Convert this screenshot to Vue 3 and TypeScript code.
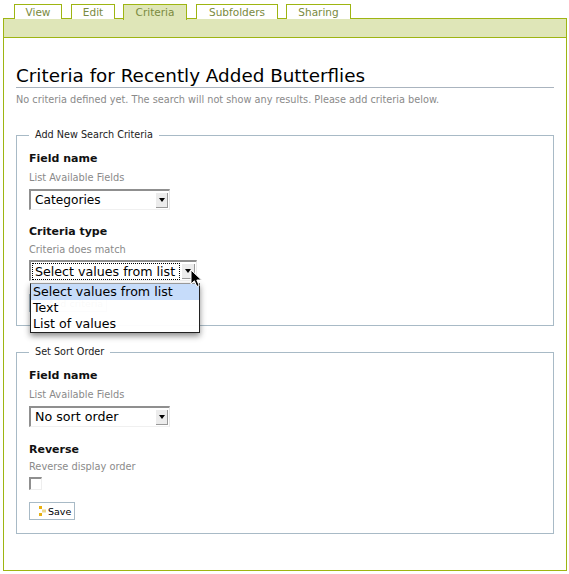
<script setup lang="ts">
const tabs = [
  { label: 'View', width: 48, gap: 9 },
  { label: 'Edit', width: 44, gap: 8 },
  { label: 'Criteria', width: 64, gap: 9, active: true },
  { label: 'Subfolders', width: 82, gap: 8 },
  { label: 'Sharing', width: 65, gap: 0 },
]
const options = ['Select values from list', 'Text', 'List of values']
</script>

<template>
  <div class="page">
    <nav class="tabs">
      <a
        v-for="t in tabs"
        :key="t.label"
        class="tab"
        :class="{ active: t.active }"
        :style="{ width: t.width + 'px', marginRight: t.gap + 'px' }"
      >{{ t.label }}</a>
    </nav>
    <main class="panel">
      <div class="bar"></div>
      <div class="content">
        <h1>Criteria for Recently Added Butterflies</h1>
        <p class="desc">No criteria defined yet. The search will not show any results. Please add criteria below.</p>

        <fieldset class="first">
          <legend>Add New Search Criteria</legend>
          <div class="field">
            <label>Field name</label>
            <div class="help">List Available Fields</div>
            <div class="select">
              <span class="value cat">Categories</span>
              <span class="arrow"><i></i></span>
            </div>
          </div>
          <div class="field type">
            <label>Criteria type</label>
            <div class="help">Criteria does match</div>
            <div class="select focus">
              <span class="value">Select values from list</span>
              <span class="arrow"><i></i></span>
            </div>
            <ul class="menu">
              <li v-for="(o, i) in options" :key="o" :class="{ sel: i === 0 }">{{ o }}</li>
            </ul>
            <svg class="cursor" width="14" height="20" viewBox="0 0 14 20">
              <path d="M1 1 L1 15 L4.4 11.8 L6.8 17.5 L9.2 16.5 L6.8 11 L11.5 11 Z" fill="#000" stroke="#fff" stroke-width="1" />
            </svg>
          </div>
          <button class="btn ghost" type="button">Add criteria</button>
        </fieldset>

        <fieldset class="second">
          <legend>Set Sort Order</legend>
          <div class="field">
            <label>Field name</label>
            <div class="help">List Available Fields</div>
            <div class="select">
              <span class="value">No sort order</span>
              <span class="arrow"><i></i></span>
            </div>
          </div>
          <div class="field rev">
            <label>Reverse</label>
            <div class="help">Reverse display order</div>
            <span class="check"></span>
          </div>
          <button class="btn save" type="button">
            <svg width="7" height="10" viewBox="0 0 7 10">
              <rect x="0" y="0" width="3" height="3" fill="#e8b010" />
              <rect x="0" y="7" width="3" height="3" fill="#e8b010" />
              <rect x="3" y="3.5" width="4" height="3" fill="#ecd88c" />
            </svg>
            <span>Save</span>
          </button>
        </fieldset>
      </div>
    </main>
  </div>
</template>

<style>
html, body { margin: 0; background: #fff; }
</style>

<style scoped>
.page {
  width: 569px;
  height: 574px;
  padding: 4px 2px 0 3px;
  box-sizing: border-box;
  font-family: "DejaVu Sans", sans-serif;
  color: #000;
  overflow: hidden;
}
.tabs {
  display: flex;
  height: 14px;
  padding-left: 11px;
  position: relative;
  z-index: 1;
}
.tab {
  box-sizing: border-box;
  height: 15px;
  border: 1px solid #9eb512;
  border-bottom: 0;
  background: #fff;
  color: #7a8a40;
  font-size: 10.5px;
  line-height: 15px;
  text-align: center;
}
.tab.active {
  background: #dfe6b8;
  height: 16px;
}
.panel {
  box-sizing: border-box;
  height: 553px;
  border: 1px solid #9eb512;
}
.bar {
  height: 18px;
  background: #dfe6b8;
  border-bottom: 1px solid #9eb512;
}
.content {
  padding: 28px 12px 0 12px;
}
h1 {
  margin: 0;
  font-size: 18.35px;
  font-weight: 400;
  line-height: 19px;
  height: 21px;
  border-bottom: 1px solid #aab4bf;
  color: #000;
}
.desc {
  margin: 6px 0 0;
  font-size: 9.74px;
  line-height: 12px;
  color: #8a8a8a;
  white-space: nowrap;
}
fieldset {
  margin: 0;
  padding: 0 12px;
  border: 1px solid #a8bac6;
  box-sizing: border-box;
  min-width: 0;
  position: relative;
}
fieldset.first {
  margin-top: 22px;
  height: 198px;
  padding-top: 9px;
}
fieldset.second {
  margin-top: 19px;
  height: 189px;
  padding-top: 9px;
}
legend {
  margin-left: 0;
  padding: 0 6px;
  font-size: 9.67px;
  line-height: 14px;
  color: #222;
}
.field label {
  display: block;
  font-size: 11px;
  font-weight: 700;
  line-height: 15px;
  color: #111;
}
.help {
  margin-top: 6px;
  font-size: 9.8px;
  line-height: 12px;
  color: #8a8a8a;
}
.select {
  margin-top: 5px;
  width: 141px;
  height: 21px;
  box-sizing: border-box;
  display: flex;
  align-items: center;
  justify-content: space-between;
  border-top: 2px solid #8f8f8f;
  border-left: 2px solid #8f8f8f;
  border-right: 1px solid #e8e8e8;
  border-bottom: 1px solid #f0f0f0;
  background: #fff;
  font-size: 12.65px;
  padding-left: 4px;
  padding-right: 1px;
}
.select .value {
  line-height: 16px;
  color: #000;
}
.select .value.cat {
  font-size: 12.2px;
}
.arrow {
  width: 11px;
  height: 14px;
  background: #ececec;
  border-right: 1px solid #999;
  border-bottom: 1px solid #999;
  display: flex;
  align-items: center;
  justify-content: center;
}
.arrow i {
  width: 0;
  height: 0;
  border-left: 3.5px solid transparent;
  border-right: 3.5px solid transparent;
  border-top: 4px solid #000;
}
.type {
  margin-top: 14px;
  position: relative;
}
.type .help {
  margin-top: 5px;
}
.select.focus {
  margin-top: 4px;
  width: 168px;
  padding-left: 1px;
}
.select.focus .value {
  border: 1px dotted #000;
  padding: 0 2px;
  line-height: 15px;
  white-space: nowrap;
  flex: 1;
}
.select.focus .arrow {
  margin-left: 2px;
  width: 12px;
}
.menu {
  position: absolute;
  left: 1px;
  top: 59px;
  z-index: 3;
  width: 170px;
  height: 50px;
  margin: 0;
  padding: 0;
  box-sizing: border-box;
  list-style: none;
  background: rgba(255, 255, 255, 0.96);
  border: 1px solid #222;
  border-top: 1px solid #999;
  box-shadow: 0 3px 6px rgba(0, 0, 0, 0.45);
  font-size: 12.6px;
}
.menu li {
  height: 16px;
  line-height: 16px;
  padding-left: 2px;
  white-space: nowrap;
}
.menu li.sel {
  background: #c6dcfa;
}
.cursor {
  position: absolute;
  left: 161px;
  top: 45px;
  z-index: 4;
}
.btn {
  display: flex;
  align-items: center;
  box-sizing: border-box;
  margin: 0;
  background: #fff;
  border: 1px solid #a8bac6;
  font-family: inherit;
  font-size: 9.5px;
  color: #000;
  padding: 0;
}
.ghost {
  margin-top: 13px;
  width: 78px;
  height: 18px;
  padding-left: 18px;
  color: #777;
}
.rev {
  margin-top: 15px;
}
.rev .help {
  margin-top: 4px;
}
.check {
  display: block;
  margin-top: 4px;
  width: 13px;
  height: 13px;
  box-sizing: border-box;
  border-top: 2px solid #8f8f8f;
  border-left: 2px solid #8f8f8f;
  border-right: 1px solid #eee;
  border-bottom: 1px solid #eee;
}
.save {
  margin-top: 12px;
  width: 46px;
  height: 18px;
  padding-left: 9px;
  gap: 2px;
}
</style>
